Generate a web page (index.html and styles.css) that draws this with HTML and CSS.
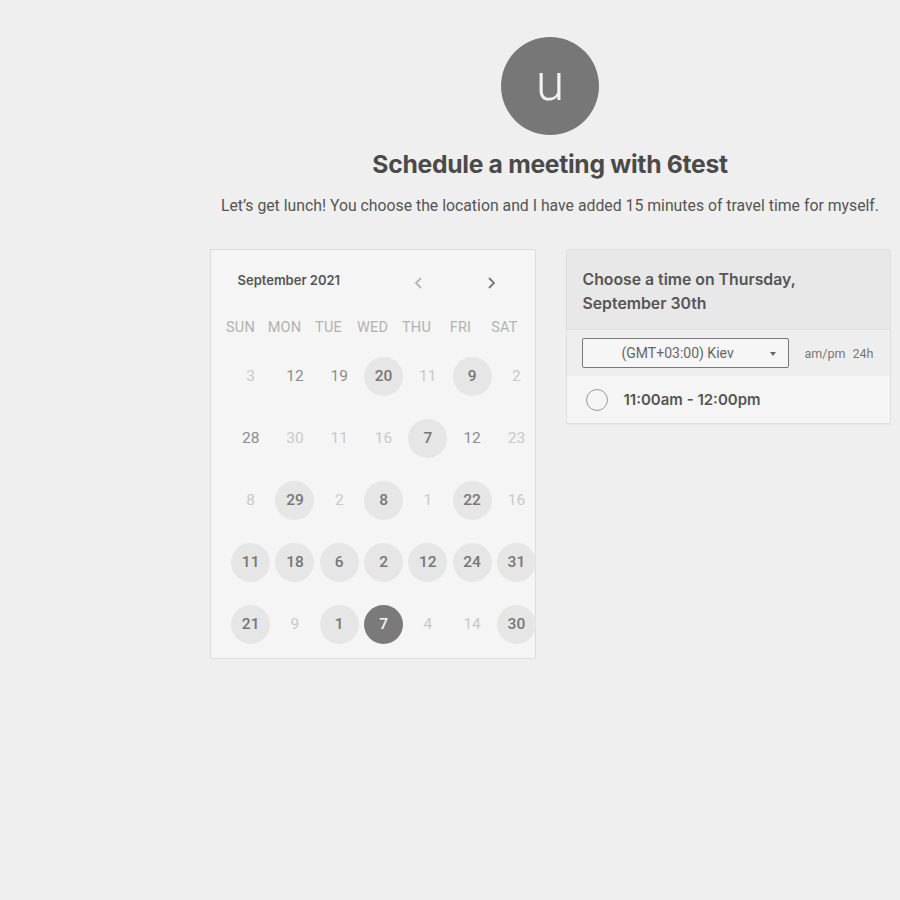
FILE: index.html
```html
<!DOCTYPE html>
<html>
<head>
<meta charset="utf-8">
<link rel="stylesheet" href="styles.css">
</head>
<body>
<div class="page">
  <div class="avatar">u</div>
  <h1 class="title">Schedule a meeting with 6test</h1>
  <p class="subtitle">Let’s get lunch! You choose the location and I have added 15 minutes of travel time for myself.</p>
  <div class="content">
    <div class="calendar">
      <div class="cal-head">
        <span class="month">September 2021</span>
        <span class="nav prev"><svg width="12" height="14" viewBox="0 0 12 14"><path d="M8 2 L3 7 L8 12" fill="none" stroke="#b5b5b5" stroke-width="1.8"/></svg></span>
        <span class="nav next"><svg width="12" height="14" viewBox="0 0 12 14"><path d="M4 2 L9 7 L4 12" fill="none" stroke="#777" stroke-width="1.8"/></svg></span>
      </div>
      <div class="weekdays">
        <span>SUN</span><span>MON</span><span>TUE</span><span>WED</span><span>THU</span><span>FRI</span><span>SAT</span>
      </div>
      <div class="days">
        <span class="d light">3</span><span class="d mid">12</span><span class="d mid">19</span><span class="d avail">20</span><span class="d light">11</span><span class="d avail">9</span><span class="d light">2</span>
        <span class="d mid">28</span><span class="d light">30</span><span class="d light">11</span><span class="d light">16</span><span class="d avail">7</span><span class="d mid">12</span><span class="d light">23</span>
        <span class="d light">8</span><span class="d avail">29</span><span class="d light">2</span><span class="d avail">8</span><span class="d light">1</span><span class="d avail">22</span><span class="d light">16</span>
        <span class="d avail">11</span><span class="d avail">18</span><span class="d avail">6</span><span class="d avail">2</span><span class="d avail">12</span><span class="d avail">24</span><span class="d avail">31</span>
        <span class="d avail">21</span><span class="d light">9</span><span class="d avail">1</span><span class="d selected">7</span><span class="d light">4</span><span class="d light">14</span><span class="d avail">30</span>
      </div>
    </div>
    <div class="times">
      <div class="times-head">Choose a time on Thursday, September 30th</div>
      <div class="controls">
        <div class="select">(GMT+03:00) Kiev<span class="caret"></span></div>
        <div class="fmt"><span>am/pm</span><span>24h</span></div>
      </div>
      <div class="slot">
        <span class="radio"></span>
        <span class="slot-text">11:00am - 12:00pm</span>
      </div>
    </div>
  </div>
</div>
</body>
</html>
```
FILE: styles.css
```css
html, body {
  margin: 0;
  padding: 0;
  background: #efefef;
}
body {
  font-family: Roboto, "Liberation Sans", sans-serif;
  color: #555;
  overflow: hidden;
}
.page {
  width: 700px;
  padding-left: 200px;
  display: flex;
  flex-direction: column;
  align-items: center;
  padding-top: 37px;
}
.avatar {
  width: 98px;
  height: 98px;
  border-radius: 50%;
  background: #777;
  color: #f2f2f2;
  font-size: 52px;
  font-weight: 300;
  display: flex;
  align-items: center;
  justify-content: center;
  line-height: 1;
  padding-bottom: 6px;
  box-sizing: border-box;
}
.title {
  margin: 14px 0 0;
  font-family: Inter, "Noto Sans", sans-serif;
  font-size: 24.7px;
  font-weight: 700;
  color: #4a4a4a;
  line-height: 30px;
  letter-spacing: -0.3px;
}
.subtitle {
  margin: 17px 0 0;
  font-size: 15.8px;
  line-height: 20px;
  color: #555;
  white-space: nowrap;
}
.content {
  margin-top: 33px;
  display: flex;
  gap: 30px;
  align-items: flex-start;
}
.calendar {
  width: 324px;
  height: 408px;
  border: 1px solid #dcdcdc;
  border-radius: 2px;
  background: #f5f5f5;
  box-sizing: content-box;
}
.cal-head {
  display: flex;
  align-items: center;
  height: 54px;
  padding: 12px 0 0 27px;
  box-sizing: border-box;
}
.month {
  font-family: Inter, "Noto Sans", sans-serif;
  font-weight: 600;
  font-size: 13px;
  color: #555;
  margin-top: -6px;
}
.nav {
  display: flex;
  width: 12px;
  height: 14px;
}
.prev { margin-left: 73px; }
.next { margin-left: 60px; }
.weekdays {
  display: grid;
  grid-template-columns: repeat(7, 44px);
  padding-left: 8px;
  height: 44px;
  align-items: center;
  margin-top: 1px;
}
.weekdays span {
  text-align: center;
  font-size: 14.5px;
  color: #b2b2b2;
  letter-spacing: 0.2px;
}
.days {
  display: grid;
  grid-template-columns: repeat(7, 44.3px);
  grid-auto-rows: 62px;
  padding-left: 18px;
  margin-top: -4px;
}
.d {
  justify-self: center;
  align-self: center;
  width: 39px;
  height: 39px;
  border-radius: 50%;
  display: flex;
  align-items: center;
  justify-content: center;
  font-size: 15.5px;
}
.light { color: #c9c9c9; }
.mid { color: #8c8c8c; }
.avail {
  background: #e6e6e6;
  color: #777;
  font-weight: 500;
}
.selected {
  background: #7a7a7a;
  color: #f5f5f5;
  font-weight: 500;
}
.times {
  width: 323px;
  border: 1px solid #dedede;
  border-radius: 2px;
  background: #f5f5f5;
  box-shadow: 0 1px 1px rgba(0,0,0,0.04);
}
.times-head {
  background: #e8e8e8;
  padding: 18px 30px 13px 16px;
  font-family: Inter, "Noto Sans", sans-serif;
  font-weight: 600;
  font-size: 15.8px;
  line-height: 24px;
  color: #555;
  border-bottom: 1px solid #e0e0e0;
}
.controls {
  background: #eeeeee;
  height: 46px;
  display: flex;
  align-items: center;
  padding-left: 15px;
  box-sizing: border-box;
}
.select {
  width: 207px;
  height: 30px;
  box-sizing: border-box;
  border: 1px solid #777;
  border-radius: 2px;
  background: #f6f6f6;
  display: flex;
  align-items: center;
  padding-left: 39px;
  font-size: 14px;
  color: #666;
  position: relative;
}
.caret {
  position: absolute;
  right: 12px;
  top: 13px;
  width: 0;
  height: 0;
  border-left: 3.5px solid transparent;
  border-right: 3.5px solid transparent;
  border-top: 4px solid #666;
}
.fmt {
  margin-left: 16px;
  display: flex;
  gap: 7px;
  font-size: 12.5px;
  color: #777;
}
.slot {
  height: 47px;
  display: flex;
  align-items: center;
  padding-left: 19px;
  box-sizing: border-box;
}
.radio {
  width: 20px;
  height: 20px;
  border: 1.5px solid #9a9a9a;
  border-radius: 50%;
  box-sizing: content-box;
}
.slot-text {
  margin-left: 16px;
  font-family: Inter, "Noto Sans", sans-serif;
  font-weight: 600;
  font-size: 15px;
  color: #555;
}
```
